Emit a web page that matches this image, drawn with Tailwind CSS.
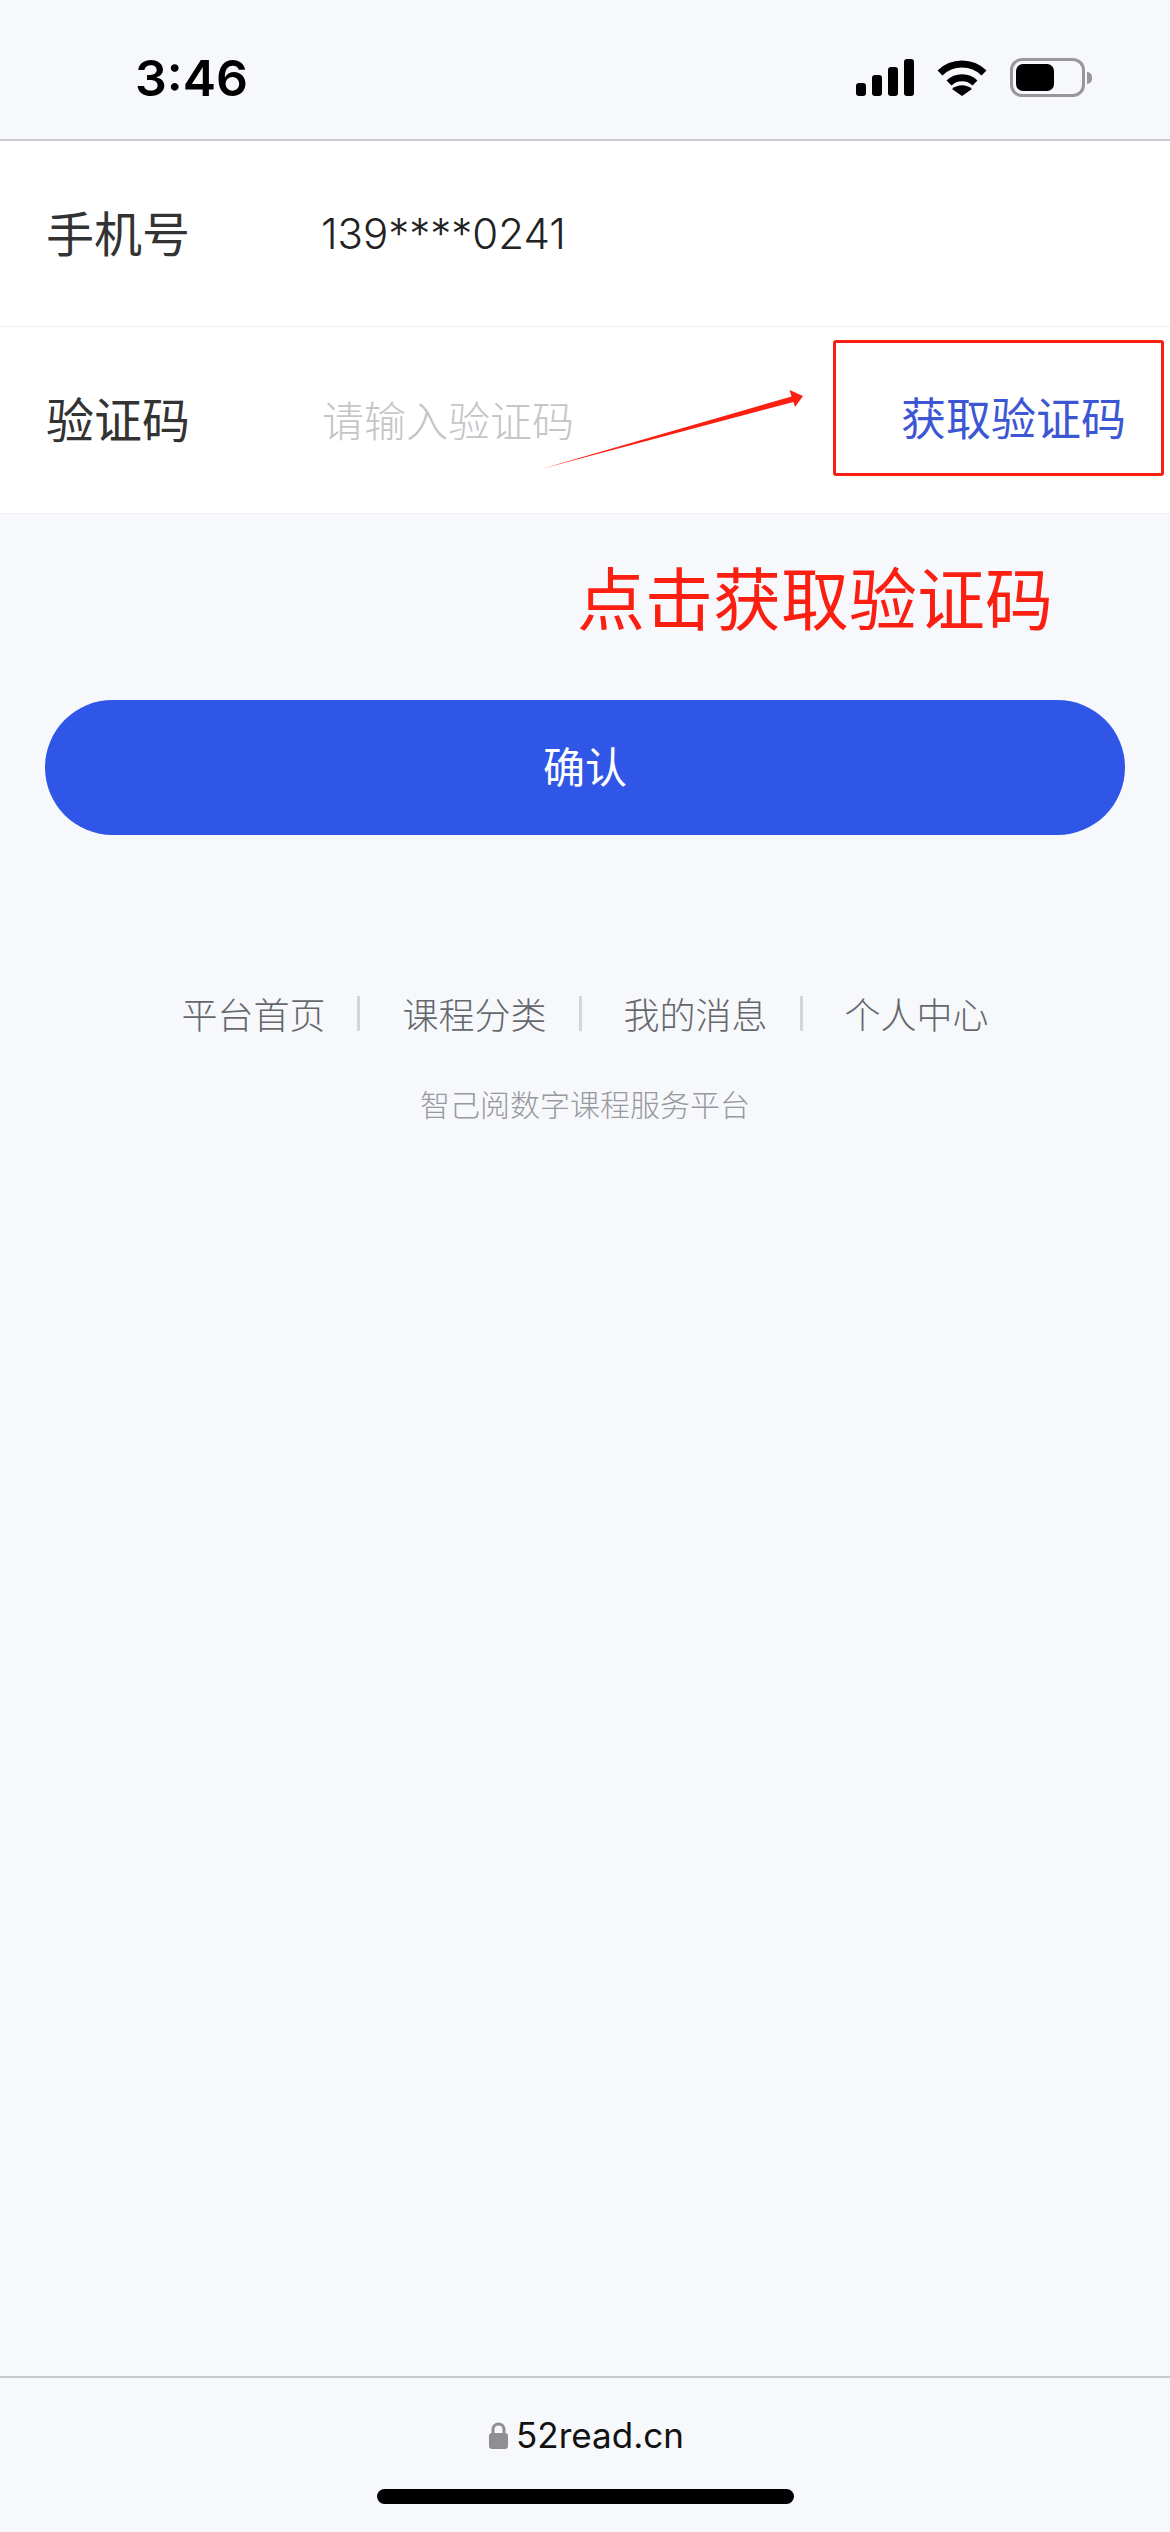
<!DOCTYPE html>
<html lang="zh-CN">
<head>
  <meta charset="UTF-8">
  <meta name="viewport" content="width=device-width, initial-scale=1.0">
  <title>验证码</title>
  <script src="https://cdn.jsdelivr.net/npm/@tailwindcss/browser@4"></script>
</head>
<body class="relative w-[1170px] h-[2532px] overflow-hidden flex flex-col bg-[#f6f8fc] font-['Noto_Sans_CJK_SC',sans-serif]">

  <!-- Status bar -->
  <div class="h-[141px] shrink-0 border-b-2 border-[#c9cace] flex items-start justify-between pt-[50px] pl-[135px] pr-[78px]">
    <span class="font-['Inter',sans-serif] font-semibold text-[50px] leading-[56px] text-black">3:46</span>
    <div class="flex items-center gap-[23px] pt-[8px]">
      <svg width="58" height="37" viewBox="0 0 58 37" fill="#000">
        <rect x="0" y="24" width="10" height="13" rx="3"/>
        <rect x="16" y="16" width="10" height="21" rx="3"/>
        <rect x="32" y="8" width="10" height="29" rx="3"/>
        <rect x="48" y="0" width="10" height="37" rx="3"/>
      </svg>
      <svg width="50" height="37" viewBox="0 0 50 37" fill="none" stroke="#000" stroke-width="7">
        <path d="M3 14 C15 2 35 2 47 14"/>
        <path d="M12 24 C19 17 31 17 38 24"/>
        <path d="M25 37 L15 30 C21 25 29 25 35 30 Z" fill="#000" stroke="none"/>
      </svg>
      <div class="flex items-center gap-[2px]">
        <div class="w-[75px] h-[39px] border-[3px] border-[#97979c] rounded-[12px] p-[3px]">
          <div class="w-[38px] h-full bg-black rounded-[7px]"></div>
        </div>
        <div class="w-[5px] h-[12px] bg-[#97979c] rounded-r-full"></div>
      </div>
    </div>
  </div>

  <!-- Form rows -->
  <div class="h-[186px] shrink-0 bg-white border-b border-[#eeeff2] flex items-center pl-[46px]">
    <span class="w-[275px] text-[48px] text-[#333333] pb-[6px]">手机号</span>
    <span class="font-['Inter',sans-serif] font-light text-[42px] text-[#222222]">139****0241</span>
  </div>
  <div class="h-[187px] shrink-0 bg-white border-b border-[#eeeff2] flex items-center justify-between pl-[46px] pr-[44px]">
    <div class="flex items-center">
      <span class="w-[276px] text-[48px] text-[#333333] pb-[6px]">验证码</span>
      <span class="text-[42px] text-[#c4c5c8] font-light pb-[4px]">请输入验证码</span>
    </div>
    <span class="text-[45px] text-[#3d57d4] pb-[7px]">获取验证码</span>
  </div>

  <!-- Confirm -->
  <button class="mt-[186px] mx-[45px] h-[135px] shrink-0 rounded-full bg-[#3056e8] text-white text-[42px] font-normal pb-[6px]">确认</button>

  <!-- Footer links -->
  <div class="mt-[156px] flex items-center justify-center text-[36px] leading-[44px] text-[#66676c] font-light">
    <span>平台首页</span>
    <div class="w-[3px] h-[35px] ml-[32px] mr-[42px] bg-[#d3d5d9]"></div>
    <span>课程分类</span>
    <div class="w-[3px] h-[35px] ml-[32px] mr-[42px] bg-[#d3d5d9]"></div>
    <span>我的消息</span>
    <div class="w-[3px] h-[35px] ml-[32px] mr-[42px] bg-[#d3d5d9]"></div>
    <span>个人中心</span>
  </div>
  <p class="mt-[48px] text-center text-[30px] leading-[40px] text-[#98999e] font-light">智己阅数字课程服务平台</p>

  <!-- Safari address bar -->
  <div class="mt-auto h-[156px] shrink-0 border-t-2 border-[#c9cace] flex flex-col items-center">
    <div class="mt-[37px] flex items-center gap-[8px] pl-[3px]">
      <svg width="19" height="27" viewBox="0 0 19 27">
        <path d="M4 12 V7.5 a5.5 5.5 0 0 1 11 0 V12" fill="none" stroke="#8e8e93" stroke-width="3"/>
        <rect x="0" y="11" width="19" height="16" rx="3" fill="#8e8e93"/>
      </svg>
      <span class="font-['Inter',sans-serif] text-[35px] leading-[40px] text-[#111111]">52read.cn</span>
    </div>
    <div class="mt-[34px] w-[417px] h-[15px] rounded-full bg-black"></div>
  </div>

  <!-- Red annotations -->
  <div class="absolute left-[833px] top-[340px] w-[331px] h-[136px] border-[3px] border-[#fb1f12] rounded-[3px]"></div>
  <svg class="absolute left-[530px] top-[385px]" width="280" height="90" viewBox="530 385 280 90">
    <path d="M541 469 L791.5 396.5 L789.5 390 L803 396 L795 407 L793.5 402 Z" fill="#fb1f12"/>
  </svg>
  <p class="absolute left-[577px] top-[548px] text-[68px] leading-[96px] text-[#fb1f12] whitespace-nowrap">点击获取验证码</p>

</body>
</html>
